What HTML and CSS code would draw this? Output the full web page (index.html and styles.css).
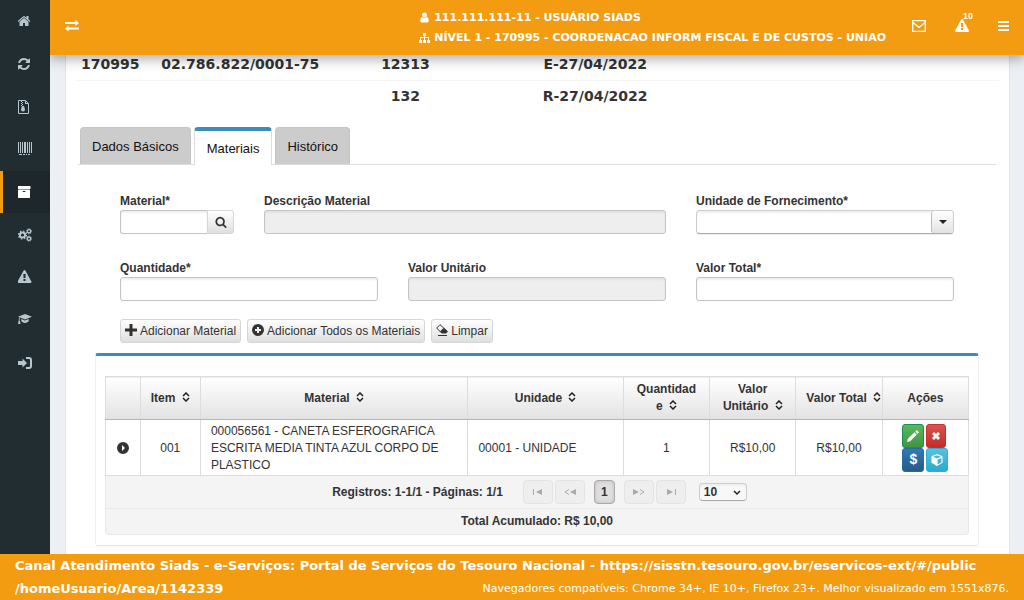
FILE: index.html
```html
<!DOCTYPE html>
<html lang="pt-BR">
<head>
    <meta charset="UTF-8">
    <meta name="viewport" content="width=device-width, initial-scale=1.0">
    <title>Siads</title>
    <link rel="stylesheet" href="styles.css">
</head>
<body>
    <div class="shell">
        <nav class="sidebar">
            <a href="#" aria-label="Início"><svg class="icon" viewBox="128 0 1792 1792"><path d="M1472 992v480q0 26-19 45t-45 19h-384v-384h-256v384h-384q-26 0-45-19t-19-45v-480q0-1 .5-3t.5-3l575-474 575 474q1 2 1 6zm223-69l-62 74q-8 9-21 11h-3q-13 0-21-7l-692-577-692 577q-12 8-24 7-13-2-21-11l-62-74q-8-10-7-23.500t11-21.500l719-599q32-26 76-26t76 26l244 204v-195q0-14 9-23t23-9h192q14 0 23 9t9 23v408l219 182q10 8 11 21.500t-7 23.500z"/></svg></a>
            <a href="#" aria-label="Atualizar"><svg class="icon" viewBox="128 0 1792 1792"><path d="M1639 1056q0 5-1 7-64 268-268 434.500t-478 166.500q-146 0-282.500-55t-243.500-157l-129 129q-19 19-45 19t-45-19-19-45v-448q0-26 19-45t45-19h448q26 0 45 19t19 45-19 45l-137 137q71 66 161 102t187 36q134 0 250-65t186-179q11-17 53-117 8-23 30-23h192q13 0 22.500 9.500t9.500 22.500zm25-800v448q0 26-19 45t-45 19h-448q-26 0-45-19t-19-45 19-45l138-138q-148-137-349-137-134 0-250 65t-186 179q-11 17-53 117-8 23-30 23h-199q-13 0-22.500-9.500t-9.500-22.500v-7q65-268 270-434.500t480-166.500q146 0 284 55.500t245 156.500l130-129q19-19 45-19t45 19 19 45z"/></svg></a>
            <a href="#" aria-label="Arquivos"><svg class="icon" viewBox="1 0 14 14"><path d="M1.500.5h7l3 3v10h-10z" fill="none" stroke="currentColor"/><path d="M8 1v3h3V3H9V1zM4 1h1v1H4zM5 2h1v1H5zM4 3h1v1H4zM5 4h1v1H5zM4 5h1v1H4zM5 6h2l1 3.500q0 2-2 2t-2-2z"/></svg></a>
            <a href="#" aria-label="Código de barras"><svg class="icon" viewBox="0 0 14 14"><path d="M0 0h1v11H0zM2 0h1v11H2zM4 0h1v11H4zM6 0h2v11H6zM9 0h1v11H9zM11 0h1v11h-1zM13 0h1v11h-1zM1 12h3v1H1zM5 12h2v1H5zM8 12h1v1H8zM10 12h2v1h-2z"/></svg></a>
            <a href="#" class="active" aria-label="Materiais"><svg class="icon" viewBox="128 0 1792 1792"><path d="M1088 832q0-26-19-45t-45-19h-256q-26 0-45 19t-19 45 19 45 45 19h256q26 0 45-19t19-45zm576-192v960q0 26-19 45t-45 19h-1408q-26 0-45-19t-19-45v-960q0-26 19-45t45-19h1408q26 0 45 19t19 45zm64-448v256q0 26-19 45t-45 19h-1536q-26 0-45-19t-19-45v-256q0-26 19-45t45-19h1536q26 0 45 19t19 45z"/></svg></a>
            <a href="#" aria-label="Configurações"><svg class="icon" viewBox="0 0 14 14"><g fill="none" stroke="currentColor"><circle cx="4.500" cy="7" r="2.600" stroke-width="2"/><circle cx="4.500" cy="7" r="4" stroke-width="1.200" stroke-dasharray="1.570"/><circle cx="11" cy="3.300" r="1.700" stroke-width="1.300"/><circle cx="11" cy="3.300" r="2.600" stroke-width=".8" stroke-dasharray="1.020"/><circle cx="11" cy="10.700" r="1.700" stroke-width="1.300"/><circle cx="11" cy="10.700" r="2.600" stroke-width=".8" stroke-dasharray="1.020"/></g></svg></a>
            <a href="#" aria-label="Alertas"><svg class="icon" viewBox="64 0 1792 1792"><path d="M1024 1375v-190q0-14-9.500-23.500t-22.500-9.500h-192q-13 0-22.500 9.500t-9.500 23.500v190q0 14 9.500 23.500t22.500 9.500h192q13 0 22.500-9.500t9.500-23.500zm-2-374l18-459q0-12-10-19-13-11-24-11h-220q-11 0-24 11-10 7-10 21l17 457q0 10 10 16.500t24 6.500h185q14 0 23.500-6.500t10.500-16.500zm-14-934l768 1408q35 63-2 126-17 29-46.500 46t-63.500 17h-1536q-34 0-63.500-17t-46.500-46q-37-63-2-126l768-1408q17-31 47-49t65-18 65 18 47 49z"/></svg></a>
            <a href="#" aria-label="Capacitação"><svg class="icon" viewBox="0 0 14 14"><path d="M7 1l7 2.700-7 2.800L2.200 4.600Q1.500 5.500 1.500 7.600l.6.900.4 2.500H0l.4-2.500.3-.8q0-2 .7-3.400L0 3.700zM3.300 6L7 7.500 10.700 6v2.300Q9 10 7 10t-3.700-1.700z"/></svg></a>
            <a href="#" aria-label="Sair"><svg class="icon" viewBox="0 0 14 14"><path d="M4.500 2.500L9 7l-4.500 4.500V9H0V5h4.500z"/><path d="M8 2h3q2 0 2 2v6q0 2-2 2H8" fill="none" stroke="currentColor" stroke-width="2"/></svg></a>
        </nav>

        <div class="page">
            <header class="topbar">
                <button type="button" class="icon-btn menu-toggle" aria-label="Alternar menu"><svg class="icon" viewBox="0 0 14 14"><path d="M0 4h10.500V2L14 5l-3.500 3V6H0zM14 9.500H3.500v-2L0 10.500l3.500 3v-2H14z" transform="translate(0 -1)"/></svg></button>
                <div class="user-info">
                    <div><svg class="icon-sm" viewBox="64 64 1664 1664"><path d="M1536 1399q0 109-62.500 187t-150.500 78h-854q-88 0-150.500-78t-62.500-187q0-85 8.500-160.500t31.500-152 58.500-131 94-89 134.500-34.500q131 128 313 128t313-128q76 0 134.500 34.500t94 89 58.500 131 31.500 152 8.500 160.500zm-256-887q0 159-112.500 271.500t-271.500 112.500-271.500-112.500-112.500-271.500 112.500-271.500 271.500-112.500 271.500 112.500 112.500 271.500z"/></svg> 111.111.111-11 - USUÁRIO SIADS</div>
                    <div><svg class="icon-sm" viewBox="0 0 11 11"><path d="M4 1h3v3H6v1h4v3h1v3H8V8h1V6H6v2h1v3H4V8h1V6H2v2h1v3H0V8h1V5h4V4H4z"/></svg> NÍVEL 1 - 170995 - COORDENACAO INFORM FISCAL E DE CUSTOS - UNIAO</div>
                </div>
                <button type="button" class="icon-btn" aria-label="Mensagens"><svg class="icon" viewBox="0 0 14 14"><path d="M.7 1.700h12.600v10.600H.7zM1 3.500l6 5 6-5" fill="none" stroke="currentColor" stroke-width="1.300"/></svg></button>
                <button type="button" class="icon-btn" aria-label="Avisos"><svg class="icon" viewBox="0 0 1792 1792"><path d="M1024 1375v-190q0-14-9.500-23.500t-22.500-9.500h-192q-13 0-22.500 9.500t-9.500 23.500v190q0 14 9.500 23.500t22.500 9.500h192q13 0 22.500-9.500t9.500-23.500zm-2-374l18-459q0-12-10-19-13-11-24-11h-220q-11 0-24 11-10 7-10 21l17 457q0 10 10 16.500t24 6.500h185q14 0 23.500-6.500t10.500-16.500zm-14-934l768 1408q35 63-2 126-17 29-46.500 46t-63.500 17h-1536q-34 0-63.500-17t-46.500-46q-37-63-2-126l768-1408q17-31 47-49t65-18 65 18 47 49z"/></svg><span class="badge">10</span></button>
                <button type="button" class="icon-btn menu-options" aria-label="Opções"><svg class="icon" viewBox="0 0 14 14"><path d="M2 2h11v2H2zM2 6h11v2H2zM2 10h11v2H2z"/></svg></button>
            </header>

            <main class="content">
                <table class="summary">
                    <colgroup><col class="s-ug"><col class="s-cnpj"><col class="s-num"><col class="s-data"><col></colgroup>
                    <tr><td>170995</td><td>02.786.822/0001-75</td><td>12313</td><td>E-27/04/2022</td><td></td></tr>
                    <tr><td></td><td></td><td>132</td><td>R-27/04/2022</td><td></td></tr>
                </table>

                <div class="tabs">
                    <a href="#" class="tab">Dados Básicos</a>
                    <a href="#" class="tab tab-active">Materiais</a>
                    <a href="#" class="tab">Histórico</a>
                </div>

                <form class="form">
                    <div class="field span-2">
                        <label for="material">Material*</label>
                        <div class="input-group">
                            <input type="text" id="material">
                            <button type="button" class="btn" aria-label="Pesquisar"><svg class="icon-12" viewBox="0 0 1792 1792"><path d="M1216 832q0-185-131.500-316.500t-316.500-131.500-316.500 131.500-131.500 316.500 131.500 316.500 316.500 131.500 316.500-131.500 131.500-316.500zm512 832q0 52-38 90t-90 38q-54 0-90-38l-343-342q-179 124-399 124-143 0-273.500-55.500t-225-150-150-225-55.500-273.500 55.500-273.500 150-225 225-150 273.500-55.500 273.500 55.500 225 150 150 225 55.500 273.500q0 220-124 399l343 343q37 37 37 90z"/></svg></button>
                        </div>
                    </div>
                    <div class="field span-6">
                        <label for="descricao">Descrição Material</label>
                        <input type="text" id="descricao" disabled>
                    </div>
                    <div class="field span-4">
                        <label for="unidade">Unidade de Fornecimento*</label>
                        <div class="select-wrap">
                            <select id="unidade"><option></option></select>
                            <span class="select-arrow"></span>
                        </div>
                    </div>
                    <div class="field span-4">
                        <label for="quantidade">Quantidade*</label>
                        <input type="text" id="quantidade">
                    </div>
                    <div class="field span-4">
                        <label for="valorUnitario">Valor Unitário</label>
                        <input type="text" id="valorUnitario" disabled>
                    </div>
                    <div class="field span-4">
                        <label for="valorTotal">Valor Total*</label>
                        <input type="text" id="valorTotal">
                    </div>
                </form>

                <div class="actions">
                    <button type="button" class="btn"><svg class="icon-12" viewBox="0 0 12 12"><path d="M4.500 0h3v4.500H12v3H7.500V12h-3V7.500H0v-3h4.500z"/></svg>Adicionar Material</button>
                    <button type="button" class="btn"><svg class="icon-12" viewBox="0 0 12 12"><path fill-rule="evenodd" d="M6 0a6 6 0 1 1 0 12A6 6 0 0 1 6 0zM5 3v2H3v2h2v2h2V7h2V5H7V3z"/></svg>Adicionar Todos os Materiais</button>
                    <button type="button" class="btn"><svg class="icon-12" viewBox="0 0 12 12"><path d="M4 .7L.7 4l4.300 4.500H9.500L11 7z" fill="none" stroke="currentColor"/><path d="M4 7.500L7.500 4 12 7.500 10 9.500H6zM2 11h9v1H2z"/></svg>Limpar</button>
                </div>

                <section class="box">
                    <table class="grid">
                        <colgroup><col class="c-exp"><col class="c-item"><col class="c-mat"><col class="c-uni"><col class="c-val"><col class="c-val"><col class="c-val"><col class="c-val"></colgroup>
                        <thead>
                            <tr>
                                <th></th>
                                <th class="nowrap">Item <svg class="sort" viewBox="0 0 8 10"><path d="M1 4l3-3 3 3M1 6l3 3 3-3"/></svg></th>
                                <th>Material <svg class="sort" viewBox="0 0 8 10"><path d="M1 4l3-3 3 3M1 6l3 3 3-3"/></svg></th>
                                <th>Unidade <svg class="sort" viewBox="0 0 8 10"><path d="M1 4l3-3 3 3M1 6l3 3 3-3"/></svg></th>
                                <th>Quantidade <svg class="sort" viewBox="0 0 8 10"><path d="M1 4l3-3 3 3M1 6l3 3 3-3"/></svg></th>
                                <th>Valor Unitário <svg class="sort" viewBox="0 0 8 10"><path d="M1 4l3-3 3 3M1 6l3 3 3-3"/></svg></th>
                                <th class="nowrap">Valor Total <svg class="sort" viewBox="0 0 8 10"><path d="M1 4l3-3 3 3M1 6l3 3 3-3"/></svg></th>
                                <th>Ações</th>
                            </tr>
                        </thead>
                        <tbody>
                            <tr>
                                <td><button type="button" class="expander" aria-label="Expandir"><svg class="icon-12" viewBox="0 0 12 12"><path fill-rule="evenodd" d="M6 0a6 6 0 1 1 0 12A6 6 0 0 1 6 0zM5 3v6l3-3z"/></svg></button></td>
                                <td>001</td>
                                <td class="left">000056561 - CANETA ESFEROGRAFICA ESCRITA MEDIA TINTA AZUL CORPO DE PLASTICO</td>
                                <td class="left">00001 - UNIDADE</td>
                                <td>1</td>
                                <td>R$10,00</td>
                                <td>R$10,00</td>
                                <td>
                                    <div class="row-actions">
                                        <button type="button" class="act green" aria-label="Editar"><svg class="icon-12" viewBox="0 0 12 12"><path d="M0 12l.8-3.200L7.500 2.200l2.300 2.300-6.600 6.700zM8.200 1.500L9.700 0 12 2.300l-1.500 1.500z"/></svg></button>
                                        <button type="button" class="act red" aria-label="Excluir"><svg class="icon-8" viewBox="0 0 8 8"><path d="M0 2l2-2 2 2 2-2 2 2-2 2 2 2-2 2-2-2-2 2-2-2 2-2z"/></svg></button>
                                        <button type="button" class="act blue">$</button>
                                        <button type="button" class="act cyan" aria-label="Detalhes"><svg class="icon-12" viewBox="0 0 12 12"><path fill-rule="evenodd" d="M6 0l5.500 2.200v6.600L6 12 .5 8.800V2.200zM6 1.200L2 2.800l4 1.600 4-1.600zM6.600 5.500v5l3.800-2.300V4z"/></svg></button>
                                    </div>
                                </td>
                            </tr>
                        </tbody>
                    </table>
                    <div class="pager">
                        <span class="pager-info">Registros: 1-1/1 - Páginas: 1/1</span>
                        <button type="button" class="page-btn" aria-label="Primeira" disabled><svg viewBox="0 0 12 6"><path d="M1 0h1v6H1zM10 0v6L4 3z"/></svg></button>
                        <button type="button" class="page-btn" aria-label="Anterior" disabled><svg viewBox="0 0 12 6"><path d="M5 .5L1 3l4 2.500" fill="none" stroke="currentColor"/><path d="M12 0v6L6 3z"/></svg></button>
                        <button type="button" class="page-btn current">1</button>
                        <button type="button" class="page-btn" aria-label="Próxima" disabled><svg viewBox="0 0 12 6"><path d="M7 .5L11 3 7 5.500" fill="none" stroke="currentColor"/><path d="M0 0v6l6-3z"/></svg></button>
                        <button type="button" class="page-btn" aria-label="Última" disabled><svg viewBox="0 0 12 6"><path d="M10 0h1v6h-1zM2 0v6l6-3z"/></svg></button>
                        <div class="select-wrap page-size">
                            <select aria-label="Registros por página"><option>10</option></select>
                            <svg class="chevron" viewBox="0 0 8 6"><path d="M1 1l3 3 3-3"/></svg>
                        </div>
                    </div>
                    <div class="total">Total Acumulado: R$ 10,00</div>
                </section>
            </main>
        </div>
    </div>

    <footer class="footer">
        Canal Atendimento Siads - e-Serviços: Portal de Serviços do Tesouro Nacional - <a href="#">https://sisstn.tesouro.gov.br/eservicos-ext/#/public<wbr>/homeUsuario/Area/1142339</a>
        <small>Navegadores compatíveis: Chrome 34+, IE 10+, Firefox 23+. Melhor visualizado em 1551x876.</small>
    </footer>
</body>
</html>
```
FILE: styles.css
```css
* {
    box-sizing: border-box;
}

body {
    margin: 0;
    height: 100vh;
    display: flex;
    flex-direction: column;
    overflow: hidden;
    background: #ecf0f5;
    color: #333;
    font-family: "Liberation Sans", Arial, sans-serif;
    font-size: 12px;
    line-height: 17px;
}

button, input, select {
    font: inherit;
    color: inherit;
    margin: 0;
}

a {
    color: inherit;
    text-decoration: none;
}

svg {
    fill: currentColor;
    flex: none;
}

.icon {
    width: 14px;
    height: 14px;
}

.icon-12 {
    width: 12px;
    height: 12px;
}

.icon-8 {
    width: 8px;
    height: 8px;
}

.shell {
    flex: 1;
    min-height: 0;
    display: flex;
}

/* Sidebar */
.sidebar {
    width: 50px;
    flex: none;
    display: grid;
    grid-template-rows: repeat(9, 1fr);
    align-self: stretch;
    background: #222d32;
    color: #b8c7ce;
    padding-bottom: 170px;
}

.sidebar a {
    display: flex;
    align-items: center;
    padding-left: 15px;
    border-left: 3px solid transparent;
}

.sidebar a.active {
    color: #fff;
    background: #1e282c;
    border-left-color: #f39c12;
}

.page {
    flex: 1;
    min-width: 0;
    display: flex;
    flex-direction: column;
    overflow: hidden;
}

/* Top bar */
.topbar {
    height: 55px;
    flex: none;
    display: flex;
    align-items: center;
    padding: 0 14px 3px 0;
    position: relative;
    z-index: 2;
    background: #f39c12;
    color: #fff;
    box-shadow: 0 6px 12px rgba(0, 0, 0, 0.18), 0 4px 8px rgba(0, 0, 0, 0.12);
}

.icon-btn {
    position: relative;
    display: flex;
    padding: 0;
    margin-left: 29px;
    border: 0;
    background: none;
    color: #fff;
    cursor: pointer;
}

.menu-toggle {
    margin-left: 15px;
}

.menu-options {
    margin-left: 27px;
}

.badge {
    position: absolute;
    left: 8px;
    top: -8px;
    font-size: 9px;
    font-weight: bold;
    line-height: 10px;
}

.user-info {
    margin-left: auto;
    margin-right: -3px;
    padding-top: 4px;
    font-family: "DejaVu Sans", sans-serif;
    font-size: 11px;
    font-weight: bold;
    line-height: 20px;
}

.icon-sm {
    width: 11px;
    height: 11px;
    vertical-align: -2px;
}

/* Content */
.content {
    flex: 1;
    margin: -6px 14px 0 15px;
    padding: 0 10px;
    background: #fff;
    border: solid #e0e4ea;
    border-width: 0 1px;
}

.summary {
    width: 100%;
    table-layout: fixed;
    border-collapse: collapse;
    font-family: "DejaVu Sans", sans-serif;
    font-size: 14px;
    font-weight: bold;
    line-height: 30px;
    text-align: center;
}

.summary td {
    height: 31px;
    padding: 0;
    border-bottom: 1px solid #f4f4f4;
    white-space: nowrap;
}

.summary tr:last-child td {
    border-bottom: 0;
}

.s-ug { width: 7.4%; }
.s-cnpj { width: 20.8%; }
.s-num { width: 15%; }
.s-data { width: 26.1%; }

.tabs {
    display: flex;
    align-items: flex-end;
    gap: 3px;
    margin: 16px 3px 0 2px;
    padding: 0 2px;
    border-bottom: 1px solid #ddd;
}

.tab {
    height: 37px;
    padding: 0 11px;
    border: 1px solid #c5c5c5;
    border-bottom: 0;
    border-radius: 4px 4px 0 0;
    background: #ccc;
    color: #111;
    font-size: 13px;
    line-height: 38px;
}

.tab-active {
    height: 38px;
    margin-bottom: -1px;
    padding: 0 12px;
    border-color: #ddd;
    border-top: 4px solid #3c8dbc;
    background: #fff;
    line-height: 36px;
}

.form {
    display: grid;
    grid-template-columns: repeat(12, minmax(0, 1fr));
    gap: 26px 30px;
    margin: 28px 45px 0 44px;
}

.span-2 { grid-column: span 2; }
.span-4 { grid-column: span 4; }
.span-6 { grid-column: span 6; }

.field label {
    display: block;
    font-weight: bold;
}

.field input {
    display: block;
    width: 100%;
    height: 24px;
    padding: 2px 4px;
    border: 1px solid #c4c4c4;
    border-radius: 3px;
    background: #fff;
    box-shadow: inset 0 2px 2px #efefef;
}

.field input:disabled {
    background: #eee;
    box-shadow: inset 0 2px 2px #e2e2e2;
}

.input-group {
    display: flex;
}

.input-group input {
    flex: 1;
    min-width: 0;
    border-radius: 3px 0 0 3px;
    border-right: 0;
}

.input-group .btn {
    width: 27px;
    justify-content: center;
    border-radius: 0 3px 3px 0;
}

.btn {
    display: flex;
    align-items: center;
    gap: 3px;
    height: 24px;
    padding: 0 4px;
    border: 1px solid #d6d6d6;
    border-radius: 3px;
    background: linear-gradient(#fff, #dfdfdf);
    cursor: pointer;
}

.actions {
    display: flex;
    gap: 6px;
    margin: 18px 44px 10px;
}

.actions .icon-12 {
    margin-bottom: 3px;
}

.select-wrap {
    position: relative;
}

.select-wrap select {
    appearance: none;
    display: block;
    width: 100%;
    height: 24px;
    padding: 0 4px;
    border: 1px solid #ccc;
    border-bottom-color: #aaa;
    border-radius: 4px;
    background: #fff;
    box-shadow: inset 0 2px 2px #efefef, 0 1px 1px #eee;
}

.select-arrow {
    position: absolute;
    top: 1px;
    right: 1px;
    bottom: 1px;
    width: 22px;
    border-left: 1px solid #bbb;
    border-radius: 3px;
    background: linear-gradient(#fff, #e2e2e2);
    pointer-events: none;
    display: grid;
    place-items: center;
}

.select-arrow::after {
    content: "";
    border: 4px solid transparent;
    border-top-color: #222;
    border-bottom: 0;
}

/* Materials list */
.box {
    margin: 0 20px 0 19px;
    padding: 20px 9px 10px;
    border: 1px solid #f2f2f2;
    border-top: 3px solid #3c8dbc;
    border-bottom-color: #e4e4e4;
    border-radius: 3px;
}

.grid {
    width: 100%;
    table-layout: fixed;
    border-collapse: collapse;
    text-align: center;
}

.grid th, .grid td {
    padding: 0 10px;
    border: 1px solid #ddd;
}

.grid th {
    height: 43px;
    background: linear-gradient(#fff, #e2e2e2);
    border-bottom-color: #b5b5b5;
    overflow-wrap: break-word;
}

.grid td {
    height: 56px;
    padding-top: 2px;
}

.grid td:first-child, .grid td:last-child {
    padding: 0;
}

.grid .left {
    text-align: left;
}

.grid .nowrap {
    white-space: nowrap;
}

.c-exp { width: 4%; }
.c-item { width: 7%; }
.c-mat { width: 31%; }
.c-uni { width: 18%; }
.c-val { width: 10%; }

.sort {
    width: 8px;
    height: 10px;
    margin-left: 3px;
    fill: none;
    stroke: #222;
    stroke-width: 1.5;
}

.expander {
    display: inline-flex;
    vertical-align: middle;
    padding: 0;
    border: 0;
    background: none;
    cursor: pointer;
}

.row-actions {
    display: grid;
    grid-template-columns: 22px 22px;
    column-gap: 2px;
    justify-content: center;
}

.act {
    height: 24px;
    padding: 0;
    display: flex;
    align-items: center;
    justify-content: center;
    border: 1px solid;
    border-radius: 3px;
    color: #fff;
    font-size: 14px;
    font-weight: bold;
    cursor: pointer;
}

.green {
    background: linear-gradient(#5cb85c, #419641);
    border-color: #149256;
}

.red {
    width: 20px;
    background: linear-gradient(#d9534f, #c12e2a);
    border-color: #c9302c;
}

.blue {
    background: linear-gradient(#337ab7, #265a88);
    border-color: #286aa5;
}

.cyan {
    background: linear-gradient(#5bc0de, #2aabd2);
    border-color: #31aed6;
}

.pager, .total {
    display: flex;
    align-items: center;
    justify-content: center;
    background: #f4f4f4;
    border: 1px solid #e9e9e9;
    border-top: 0;
    font-weight: bold;
}

.pager {
    height: 33px;
    gap: 2px;
    padding-left: 5px;
}

.total {
    height: 26px;
    border-radius: 0 0 4px 4px;
}

.pager-info {
    margin-right: 18px;
}

.page-btn {
    width: 30px;
    height: 24px;
    padding: 0;
    display: flex;
    align-items: center;
    justify-content: center;
    border: 1px solid #e3e3e3;
    border-radius: 4px;
    background: #eee;
    color: #aaa;
}

.page-btn svg {
    width: 12px;
    height: 6px;
}

.page-btn.current {
    width: 21px;
    margin: 0 7px;
    border-color: #aaa;
    background: #e0e0e0;
    color: #333;
    box-shadow: inset 0 0 4px #bbb;
}

.page-size {
    width: 48px;
    margin-left: 11px;
}

.page-size select {
    height: 18px;
    background: #f8f8f8;
    font-weight: bold;
}

.chevron {
    position: absolute;
    right: 6px;
    top: 7px;
    width: 8px;
    height: 6px;
    fill: none;
    stroke: #222;
    stroke-width: 1.5;
    pointer-events: none;
}

/* Footer */
.footer {
    flex: none;
    position: relative;
    z-index: 3;
    padding: 0 15px;
    background: #f39c12;
    color: #fff;
    font-family: "DejaVu Sans", sans-serif;
    font-size: 13px;
    font-weight: bold;
    line-height: 23px;
}

.footer small {
    float: right;
    font-size: 11px;
    font-weight: normal;
}
```
